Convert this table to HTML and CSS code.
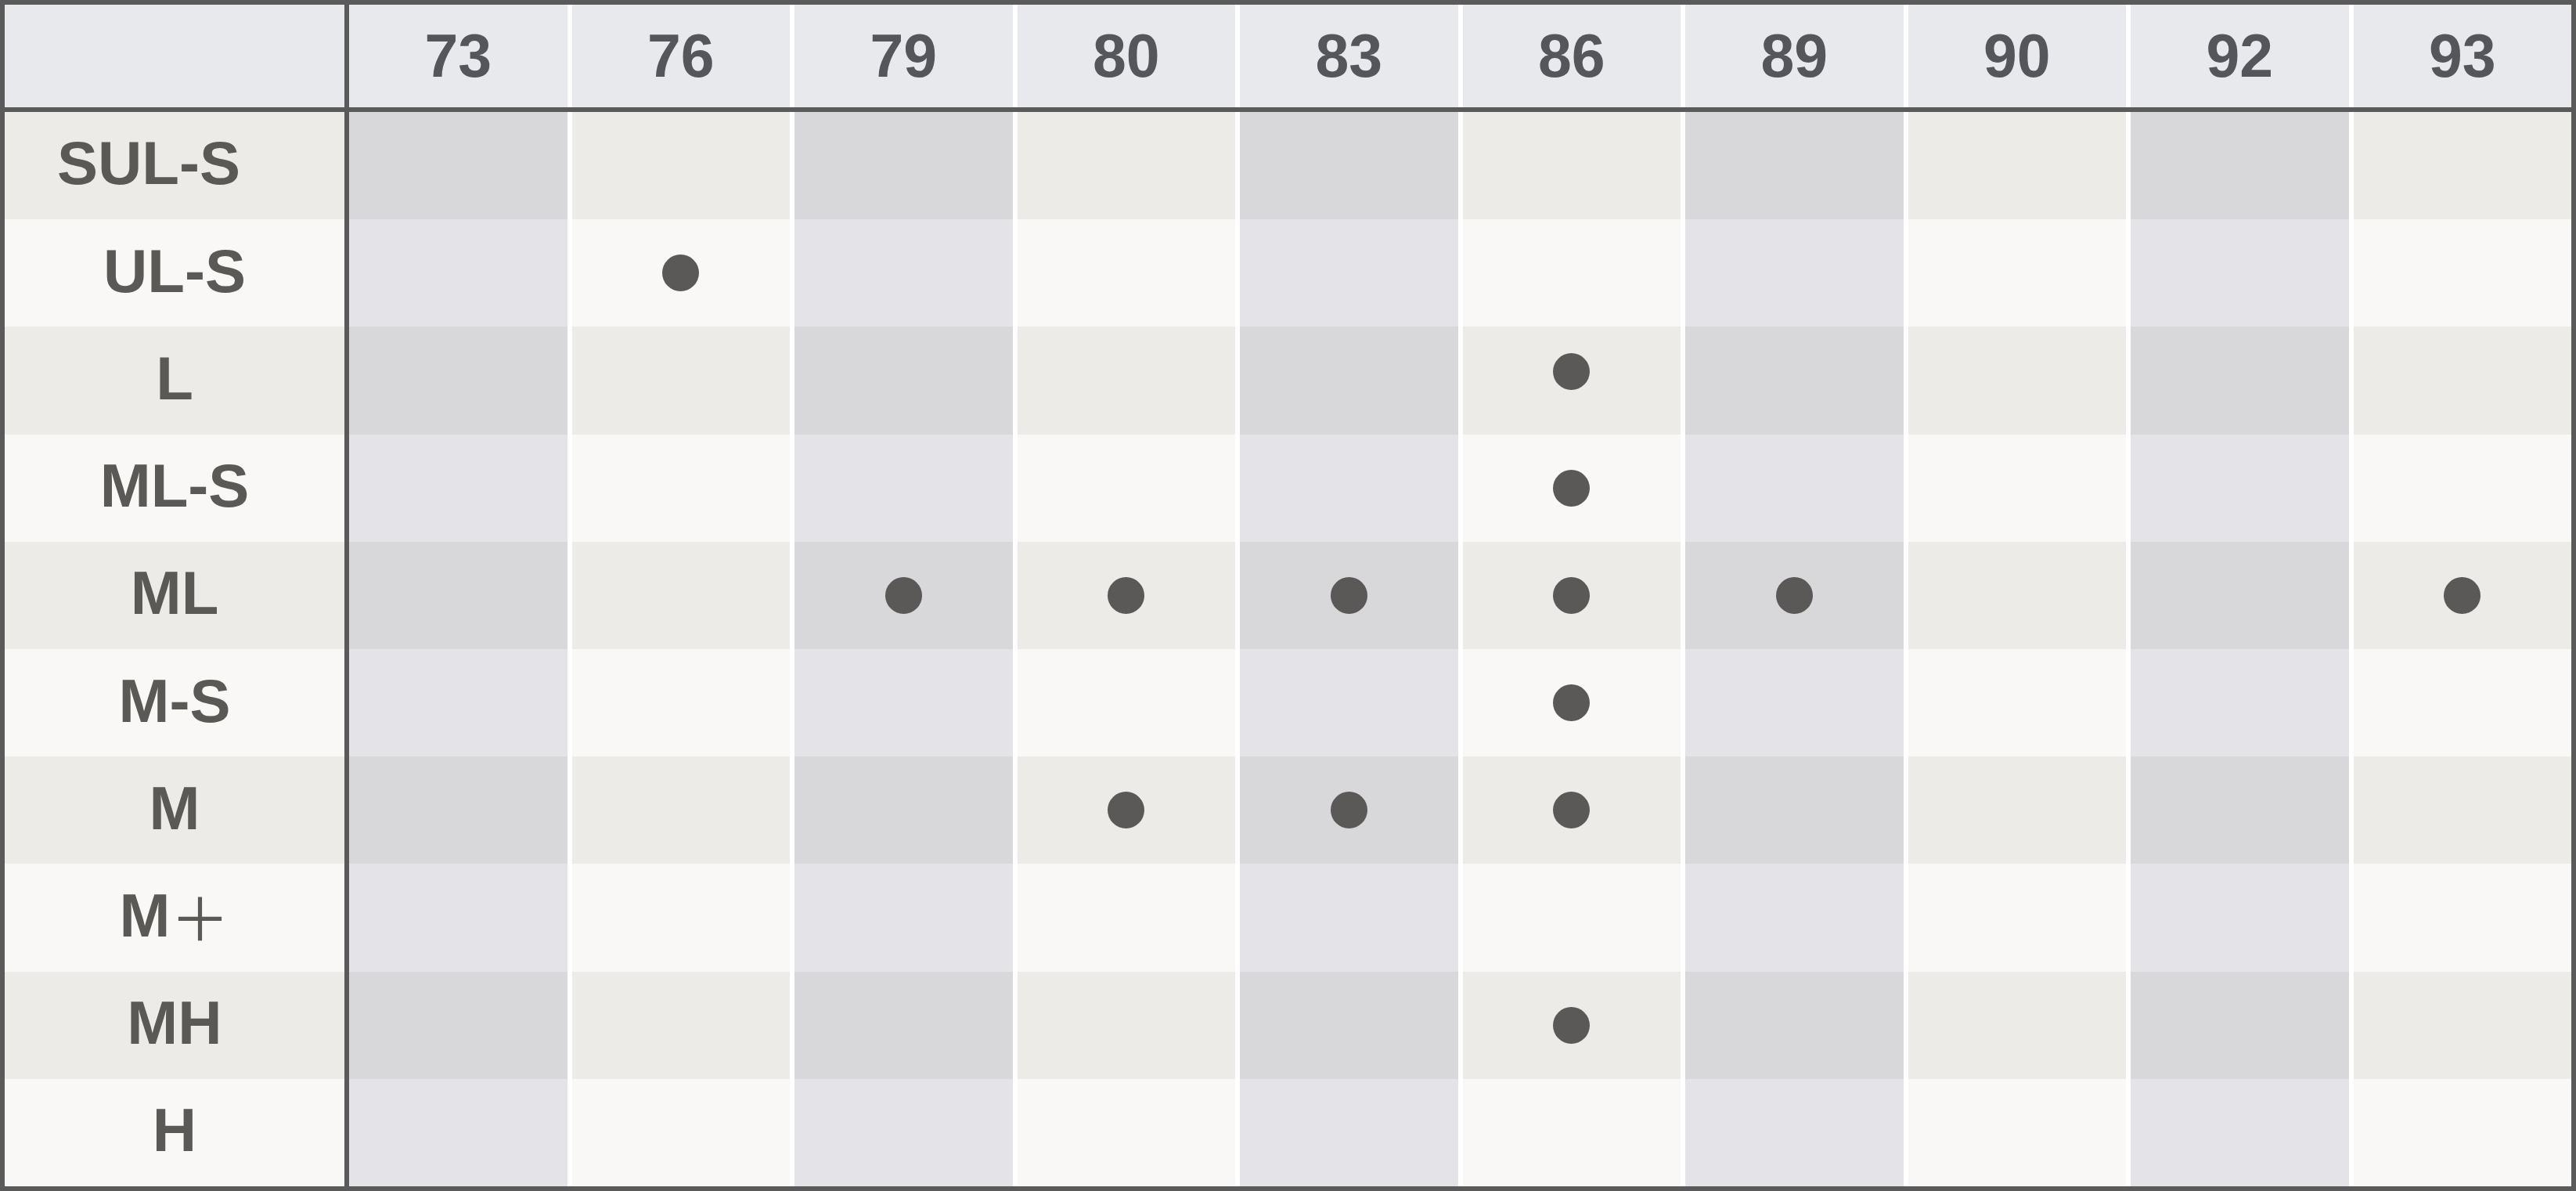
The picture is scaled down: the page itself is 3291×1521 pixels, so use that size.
FILE: index.html
```html
<!DOCTYPE html>
<html lang="ja">
<head>
<meta charset="utf-8">
<title>Size chart</title>
<link rel="stylesheet" href="styles.css">
</head>
<body>
<div class="chart">
  <div class="row head">
    <div class="label"></div>
    <div class="data">
      <div class="cell">73</div><div class="cell">76</div><div class="cell">79</div><div class="cell">80</div><div class="cell">83</div>
      <div class="cell">86</div><div class="cell">89</div><div class="cell">90</div><div class="cell">92</div><div class="cell">93</div>
    </div>
  </div>
  <div class="body">
    <div class="row odd">
      <div class="label wide">SUL-S</div>
      <div class="data">
        <div class="cell"></div><div class="cell"></div><div class="cell"></div><div class="cell"></div><div class="cell"></div>
        <div class="cell"></div><div class="cell"></div><div class="cell"></div><div class="cell"></div><div class="cell"></div>
      </div>
    </div>
    <div class="row even">
      <div class="label">UL-S</div>
      <div class="data">
        <div class="cell"></div><div class="cell"><span class="dot"></span></div><div class="cell"></div><div class="cell"></div><div class="cell"></div>
        <div class="cell"></div><div class="cell"></div><div class="cell"></div><div class="cell"></div><div class="cell"></div>
      </div>
    </div>
    <div class="row odd">
      <div class="label">L</div>
      <div class="data">
        <div class="cell"></div><div class="cell"></div><div class="cell"></div><div class="cell"></div><div class="cell"></div>
        <div class="cell"><span class="dot raised"></span></div><div class="cell"></div><div class="cell"></div><div class="cell"></div><div class="cell"></div>
      </div>
    </div>
    <div class="row even">
      <div class="label">ML-S</div>
      <div class="data">
        <div class="cell"></div><div class="cell"></div><div class="cell"></div><div class="cell"></div><div class="cell"></div>
        <div class="cell"><span class="dot"></span></div><div class="cell"></div><div class="cell"></div><div class="cell"></div><div class="cell"></div>
      </div>
    </div>
    <div class="row odd">
      <div class="label">ML</div>
      <div class="data">
        <div class="cell"></div><div class="cell"></div><div class="cell"><span class="dot"></span></div><div class="cell"><span class="dot"></span></div><div class="cell"><span class="dot"></span></div>
        <div class="cell"><span class="dot"></span></div><div class="cell"><span class="dot"></span></div><div class="cell"></div><div class="cell"></div><div class="cell"><span class="dot"></span></div>
      </div>
    </div>
    <div class="row even">
      <div class="label">M-S</div>
      <div class="data">
        <div class="cell"></div><div class="cell"></div><div class="cell"></div><div class="cell"></div><div class="cell"></div>
        <div class="cell"><span class="dot"></span></div><div class="cell"></div><div class="cell"></div><div class="cell"></div><div class="cell"></div>
      </div>
    </div>
    <div class="row odd">
      <div class="label">M</div>
      <div class="data">
        <div class="cell"></div><div class="cell"></div><div class="cell"></div><div class="cell"><span class="dot"></span></div><div class="cell"><span class="dot"></span></div>
        <div class="cell"><span class="dot"></span></div><div class="cell"></div><div class="cell"></div><div class="cell"></div><div class="cell"></div>
      </div>
    </div>
    <div class="row even">
      <div class="label">M<span class="plus">＋</span></div>
      <div class="data">
        <div class="cell"></div><div class="cell"></div><div class="cell"></div><div class="cell"></div><div class="cell"></div>
        <div class="cell"></div><div class="cell"></div><div class="cell"></div><div class="cell"></div><div class="cell"></div>
      </div>
    </div>
    <div class="row odd">
      <div class="label">MH</div>
      <div class="data">
        <div class="cell"></div><div class="cell"></div><div class="cell"></div><div class="cell"></div><div class="cell"></div>
        <div class="cell"><span class="dot"></span></div><div class="cell"></div><div class="cell"></div><div class="cell"></div><div class="cell"></div>
      </div>
    </div>
    <div class="row even">
      <div class="label">H</div>
      <div class="data">
        <div class="cell"></div><div class="cell"></div><div class="cell"></div><div class="cell"></div><div class="cell"></div>
        <div class="cell"></div><div class="cell"></div><div class="cell"></div><div class="cell"></div><div class="cell"></div>
      </div>
    </div>
  </div>
</div>
</body>
</html>
```

FILE: styles.css
```css
* { box-sizing: border-box; }

html, body {
  margin: 0;
  padding: 0;
  background: #ffffff;
}

.chart {
  width: 3291px;
  height: 1521px;
  border: 6px solid #5a5a5a;
  display: flex;
  flex-direction: column;
  font-family: "Liberation Sans", Arial, "Noto Sans CJK JP", sans-serif;
  font-weight: 700;
  color: #5a5956;
}

.row {
  display: flex;
}

.row.head {
  height: 137px;
  border-bottom: 6px solid #5a5a5a;
  background: #ffffff;
}

.body {
  flex: 1;
  display: flex;
  flex-direction: column;
}

.body .row {
  flex: 1;
}

.label {
  width: 440px;
  flex: none;
  border-right: 6px solid #5a5a5a;
  display: flex;
  align-items: center;
  justify-content: center;
  font-size: 78px;
  line-height: 1;
}

.body .label {
  padding-bottom: 6px;
}

.body .label.wide {
  padding-right: 66px;
  padding-bottom: 8px;
}

.plus {
  font-family: "Noto Sans CJK JP", sans-serif;
  font-weight: 400;
  font-size: 76px;
}

.data {
  flex: 1;
  display: grid;
  grid-template-columns: repeat(10, 1fr);
  column-gap: 6px;
  background: #ffffff;
}

.cell {
  display: flex;
  align-items: center;
  justify-content: center;
}

.head .label,
.head .cell {
  background: #e8e9ed;
}

.head .cell {
  font-size: 77px;
  color: #55565b;
  line-height: 1;
}

.odd .label { background: #ecebe8; }
.even .label { background: #f9f8f6; }

.odd .cell:nth-child(odd) { background: #d8d8da; }
.odd .cell:nth-child(even) { background: #ecebe8; }
.even .cell:nth-child(odd) { background: #e4e3e8; }
.even .cell:nth-child(even) { background: #f9f8f6; }

.dot {
  width: 47px;
  height: 47px;
  border-radius: 50%;
  background: #5a5957;
}

.dot.raised {
  margin-bottom: 24px;
}
```
